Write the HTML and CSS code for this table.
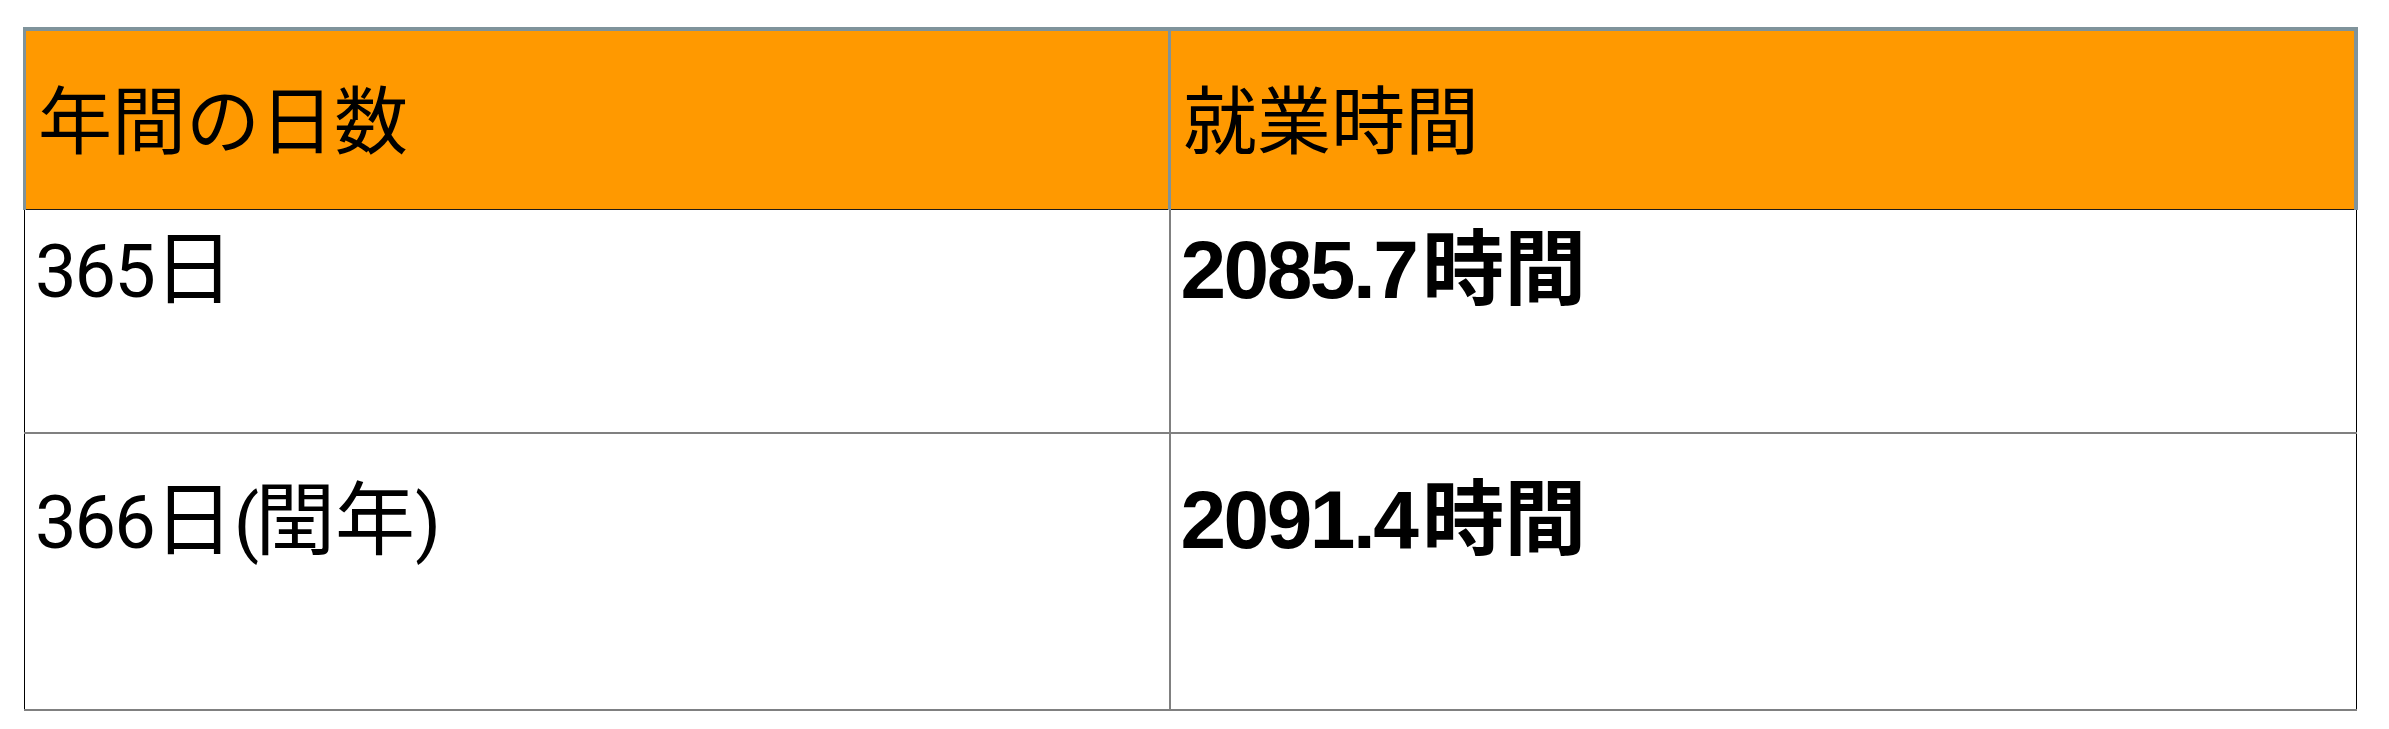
FILE: index.html
```html
<!DOCTYPE html>
<html lang="ja">
<head>
<meta charset="utf-8">
<title>年間の就業時間</title>
<link rel="stylesheet" href="styles.css">
</head>
<body>
<div class="page">
  <table class="hours">
    <colgroup><col class="col-days"><col class="col-total"></colgroup>
    <thead>
      <tr class="head">
        <th class="h-days">年間の日数</th>
        <th class="h-total">就業時間</th>
      </tr>
    </thead>
    <tbody>
      <tr class="r1">
        <td class="days"><span class="num">365</span>日</td>
        <td class="total"><strong><span class="fig">2085.7</span>時間</strong></td>
      </tr>
      <tr class="r2">
        <td class="days"><span class="num">366</span>日<span class="paren">(</span>閏年<span class="paren">)</span></td>
        <td class="total"><strong><span class="fig">2091.4</span>時間</strong></td>
      </tr>
    </tbody>
  </table>
</div>
</body>
</html>
```

FILE: styles.css
```css
html, body {
  margin: 0;
  background: #ffffff;
}

.page {
  padding: 27px 0 0 23px;
}

.hours {
  border-collapse: collapse;
  table-layout: fixed;
  width: 2335px;
  border-left: 1px solid #000000;
  border-right: 1px solid #000000;
}

.col-days {
  width: 1145px;
}

.head {
  height: 180px;
}

.r1 {
  height: 224px;
}

.r2 {
  height: 277px;
}

.hours th {
  background: #ff9900;
  color: #000000;
  font-family: "Noto Sans CJK JP", sans-serif;
  font-weight: 400;
  font-size: 74px;
  line-height: 1.2;
  text-align: left;
  vertical-align: middle;
  padding: 0 10px 6px 12px;
  border-top: 4px solid #7f939b;
  border-left: 3px solid #7f939b;
  border-right: 3px solid #7f939b;
  border-bottom: 1px solid #1a1a1a;
}

.hours th.h-total {
  border-right: 4px solid #7f939b;
}

.hours td {
  color: #000000;
  line-height: 1.2;
  text-align: left;
  vertical-align: middle;
  padding: 0 10px 102px 10px;
  border-bottom: 2px solid #808080;
}

.hours td.days {
  font-family: Roboto, "Noto Sans CJK JP", sans-serif;
  font-weight: 400;
  font-size: 80px;
  border-left: 1px solid #000000;
  border-right: 2px solid #808080;
}

.hours td.days .num {
  font-size: 74px;
  letter-spacing: -2px;
}

.hours td.days .paren {
  font-size: 74px;
  letter-spacing: -4px;
}

.hours td.total {
  font-family: "Liberation Sans", "Noto Sans CJK JP", sans-serif;
  font-size: 82px;
  border-right: 1px solid #000000;
}

.hours td.total strong {
  font-weight: 700;
}

.hours td.total .fig {
  letter-spacing: -2.5px;
  margin-right: 6px;
}
```
